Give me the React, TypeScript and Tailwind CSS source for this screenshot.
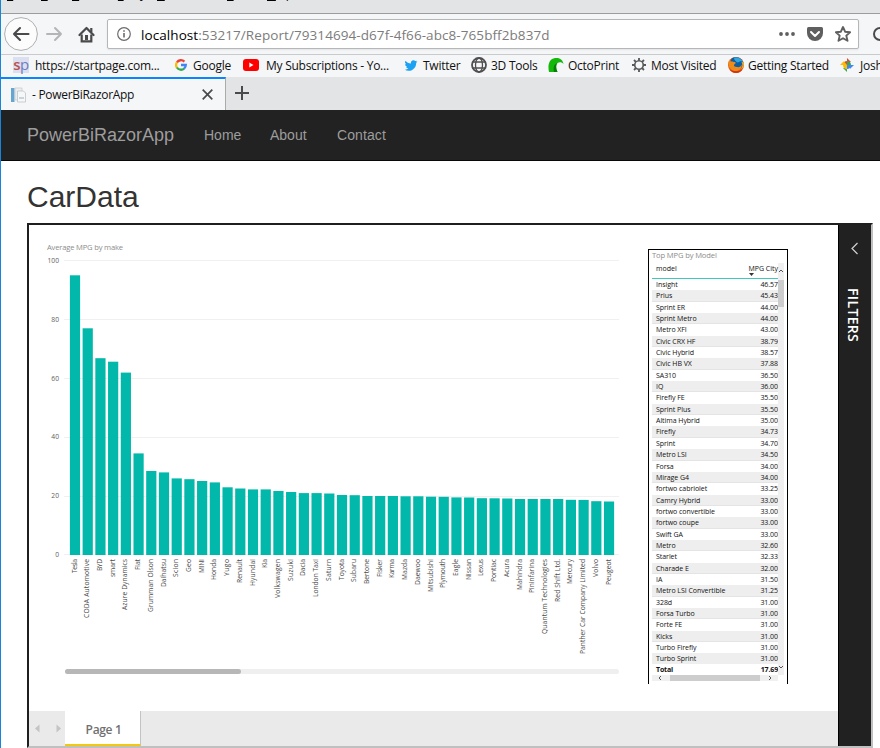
import type { ReactNode } from "react";

type Car = { make: string; top: number; len: number };

const cars: Car[] = [
  ["Tesla", 275.3, 14], ["CODA Automotive", 328.3, 59], ["BYD", 358.2, 12], ["smart", 361.7, 18],
  ["Azure Dynamics", 372.6, 51], ["Fiat", 453.4, 11], ["Grumman Olson", 471, 53], ["Daihatsu", 472.4, 28],
  ["Scion", 478.4, 18], ["Geo", 479.2, 13], ["MINI", 481, 14], ["Honda", 482.4, 21], ["Yugo", 487.3, 17],
  ["Renault", 488.5, 24], ["Hyundai", 489.4, 27], ["Kia", 489.4, 9], ["Volkswagen", 491, 39],
  ["Suzuki", 492, 22], ["Dacia", 493.1, 17], ["London Taxi", 493.1, 38], ["Saturn", 493.5, 22],
  ["Toyota", 495, 21], ["Subaru", 495.2, 23], ["Bertone", 496, 25], ["Fisker", 496, 18], ["Karma", 496, 19],
  ["Mazda", 496.3, 21], ["Daewoo", 496.3, 26], ["Mitsubishi", 496.7, 33], ["Plymouth", 496.8, 29],
  ["Eagle", 497.4, 17], ["Nissan", 497.5, 21], ["Lexus", 498.2, 17], ["Pontiac", 498.3, 23],
  ["Acura", 498.5, 18], ["Mahindra", 499, 31], ["Pininfarina", 499, 34], ["Quantum Technologies", 499, 75],
  ["Red Shift Ltd.", 499, 43], ["Mercury", 499.8, 25], ["Panther Car Company Limited", 499.9, 95],
  ["Volvo", 501.2, 18], ["Peugeot", 501.5, 26],
].map(([make, top, len]) => ({ make, top, len }) as Car);

const models: [string, string][] = [
  ["Insight", "46.57"], ["Prius", "45.43"], ["Sprint ER", "44.00"], ["Sprint Metro", "44.00"],
  ["Metro XFI", "43.00"], ["Civic CRX HF", "38.79"], ["Civic Hybrid", "38.57"], ["Civic HB VX", "37.88"],
  ["SA310", "36.50"], ["IQ", "36.00"], ["Firefly FE", "35.50"], ["Sprint Plus", "35.50"],
  ["Altima Hybrid", "35.00"], ["Firefly", "34.73"], ["Sprint", "34.70"], ["Metro LSI", "34.50"],
  ["Forsa", "34.00"], ["Mirage G4", "34.00"], ["fortwo cabriolet", "33.25"], ["Camry Hybrid", "33.00"],
  ["fortwo convertible", "33.00"], ["fortwo coupe", "33.00"], ["Swift GA", "33.00"], ["Metro", "32.60"],
  ["Starlet", "32.33"], ["Charade E", "32.00"], ["IA", "31.50"], ["Metro LSI Convertible", "31.25"],
  ["328d", "31.00"], ["Forsa Turbo", "31.00"], ["Forte FE", "31.00"], ["Kicks", "31.00"],
  ["Turbo Firefly", "31.00"], ["Turbo Sprint", "31.00"],
];

function MenuBar() {
  return (
    <div className="flex h-[14px] overflow-hidden border-b border-[#9a9c9e] bg-[#e3e4e6] pl-[6px] text-[12px] leading-[16px] text-black">
      <div className="-mt-[14px] flex h-4 underline-offset-2">
        <span className="w-[34px]"><u>F</u>ile</span>
        <span className="w-[31px]"><u>E</u>dit</span>
        <span className="w-[34px]"><u>V</u>iew</span>
        <span className="w-[51px]">Hi<u>s</u>tory</span>
        <span className="w-[70px]"><u>B</u>ookmarks</span>
        <span className="w-[40px]"><u>T</u>ools</span>
        <span><u>H</u>elp</span>
      </div>
    </div>
  );
}

function NavBar() {
  return (
    <div className="flex h-[41px] items-center overflow-hidden border-b border-[#c9cacc] bg-[#f5f6f7] pl-[3px]">
      <svg className="h-[34px] w-[34px] shrink-0" viewBox="0 0 34 34" fill="none">
        <circle cx="17" cy="17" r="16.4" fill="#fcfcfc" stroke="#aeafb0" />
        <path d="M24.500 17H10M16 11l-6 6 6 6" stroke="#4a4a4b" strokeWidth="2.100" strokeLinecap="round" strokeLinejoin="round" />
      </svg>
      <svg className="ml-[8px] h-4 w-[17px] shrink-0" viewBox="0 0 17 16" fill="none" stroke="#b4b5b6" strokeWidth="2" strokeLinecap="round" strokeLinejoin="round">
        <path d="M1 8h14M9 2l6 6-6 6" />
      </svg>
      <svg className="ml-[15px] h-[17px] w-[17px] shrink-0" viewBox="0 0 17 17" fill="none">
        <path d="M1.500 9l7-7 7 7" stroke="#4a4a4b" strokeWidth="2.200" strokeLinecap="round" strokeLinejoin="round" />
        <path d="M3.700 8.500V15.300h9.600V8.500M13.300 2v4" stroke="#4a4a4b" strokeWidth="2.200" />
        <rect x="7" y="9" width="3" height="5" fill="#4a4a4b" />
      </svg>
      <div className="ml-[12px] flex h-[30px] w-[752px] shrink-0 items-center rounded-[2px] border border-[#b5b6b8] bg-white pl-[9px] shadow-[0_1px_2px_rgba(0,0,0,0.08)]">
        <svg className="h-[14px] w-[14px]" viewBox="0 0 14 14" fill="none" stroke="#6b6b6b">
          <circle cx="7" cy="7" r="6.300" strokeWidth="1.200" />
          <path d="M7 6v4.500M7 3.300v1.500" strokeWidth="1.600" />
        </svg>
        <span className="mt-[2px] ml-[10px] w-[638px] whitespace-nowrap text-[13.5px] tracking-[0.075px] text-[#7c7c7c]">
          <span className="text-black">localhost</span>:53217/Report/79314694-d67f-4f66-abc8-765bff2b837d
        </span>
        <svg className="h-4 w-4 shrink-0" viewBox="0 0 16 16" fill="#5f5f60">
          <circle cx="2" cy="8" r="1.900" /><circle cx="8" cy="8" r="1.900" /><circle cx="14" cy="8" r="1.900" />
        </svg>
        <svg className="ml-[12px] h-4 w-4 shrink-0" viewBox="0 0 16 16">
          <path d="M1.500 1h13Q16 1 16 2.500V7a8 8 0 0 1-16 0V2.500Q0 1 1.500 1z" fill="#5f5f60" />
          <path d="M4 6l4 4 4-4" stroke="#fff" strokeWidth="2" fill="none" strokeLinecap="round" strokeLinejoin="round" />
        </svg>
        <svg className="ml-[12px] h-4 w-4 shrink-0" viewBox="0 0 16 16" fill="none" stroke="#5f5f60" strokeWidth="1.900" strokeLinejoin="round">
          <path d="M8 1l2.100 4.700 5 .5-3.800 3.400 1.200 5.200L8 12.200l-4.500 2.600 1.200-5.200L.9 6.200l5-.5z" />
        </svg>
      </div>
      <svg className="ml-[14px] h-4 w-4 shrink-0" viewBox="0 0 16 16" fill="none" stroke="#4a4a4b" strokeWidth="2">
        <circle cx="7" cy="8" r="6" />
      </svg>
    </div>
  );
}

function Bookmark({ icon, label, width }: { icon: ReactNode; label: string; width: string }) {
  return (
    <div className={"flex h-full shrink-0 items-center " + width}>
      {icon}
      <span className="whitespace-nowrap">{label}</span>
    </div>
  );
}

function BookmarksBar() {
  return (
    <div className="flex h-[22px] overflow-hidden bg-[#f5f6f7] pl-[12px] text-[12px] tracking-[-0.260px] text-[#111]">
      <Bookmark width="w-[162px]" label="https://startpage.com..." icon={
        <span className="mr-[6px] flex h-4 w-4 -translate-y-px items-center justify-center bg-[#dcdff0] pb-[2px] text-[15px] leading-none tracking-[-0.500px] text-[#6d7dbd]"><b className="font-semibold text-[#b8544f]">s</b>p</span>
      } />
      <Bookmark width="w-[69px]" label="Google" icon={
        <svg className="mr-[6px] h-[12px] w-[12px] -translate-y-px" viewBox="0 0 12 12" fill="none" strokeWidth="2.300">
          <path d="M1.900 3.500A4.850 4.850 0 0 1 9.400 2.600" stroke="#ea4335" />
          <path d="M1.900 3.400a4.850 4.850 0 0 0 0 5.200" stroke="#fbbc05" />
          <path d="M1.900 8.500a4.850 4.850 0 0 0 7.300 1" stroke="#34a853" />
          <path d="M6 6h4.800a4.850 4.850 0 0 1-1.700 3.600" stroke="#4285f4" />
        </svg>
      } />
      <Bookmark width="w-[160px]" label="My Subscriptions - Yo..." icon={
        <svg className="mr-[6px] h-[12px] w-4 -translate-x-px -translate-y-px" viewBox="0 0 16 12">
          <rect width="16" height="12" rx="3" fill="#f00" /><path d="M6.300 3.500v5L10.500 6z" fill="#fff" />
        </svg>
      } />
      <Bookmark width="w-[67px]" label="Twitter" icon={
        <svg className="mr-[5px] h-[13px] w-[14px] -translate-y-px" viewBox="0 0 24 24" fill="#1da1f2">
          <path d="M23.950 4.570a10 10 0 0 1-2.820.770 4.960 4.960 0 0 0 2.160-2.720c-.950.550-2 .960-3.130 1.180a4.920 4.920 0 0 0-8.380 4.480C7.690 8.100 4.070 6.130 1.640 3.160a4.920 4.920 0 0 0 1.520 6.570 4.900 4.900 0 0 1-2.230-.610v.060a4.920 4.920 0 0 0 3.950 4.830 5 5 0 0 1-2.210.080 4.940 4.940 0 0 0 4.600 3.420A9.870 9.870 0 0 1 0 19.540a14 14 0 0 0 7.550 2.210c9.050 0 14-7.500 14-13.980 0-.210 0-.420-.020-.630a9.940 9.940 0 0 0 2.420-2.570z" />
        </svg>
      } />
      <Bookmark width="w-[77px]" label="3D Tools" icon={
        <svg className="mr-[4px] h-4 w-4 -translate-y-px" viewBox="0 0 16 16" fill="none" stroke="#4f4f50" strokeWidth="1.300">
          <circle cx="8" cy="8" r="7" strokeWidth="1.800" /><ellipse cx="8" cy="8" rx="3.500" ry="7" /><path d="M1.500 5h13M1.500 11h13" />
        </svg>
      } />
      <Bookmark width="w-[84px]" label="OctoPrint" icon={
        <svg className="mr-[4px] h-4 w-4 -translate-y-px" viewBox="0 0 16 16">
          <path d="M1 15C-.5 8 1 2 7 1c5-.7 8 2 8.500 6-1.500-2-4-2.500-6-1C7.500 8 8 12 9.500 15z" fill="#13b80b" />
          <path d="M6 15c-1-5 0-8 3.500-9C7.500 8 8 12 9.500 15z" fill="#087d08" />
        </svg>
      } />
      <Bookmark width="w-[96px]" label="Most Visited" icon={
        <svg className="mr-[5px] h-[14px] w-[14px] -translate-y-px" viewBox="0 0 16 16" fill="none" stroke="#58585a">
          <circle cx="8" cy="8" r="4.900" strokeWidth="1.900" />
          <path d="M8 0v3M8 13v3M0 8h3M13 8h3M2.300 2.300l2.100 2.100M11.600 11.600l2.100 2.100M13.700 2.300l-2.100 2.100M4.400 11.600l-2.100 2.100" strokeWidth="2.100" />
        </svg>
      } />
      <Bookmark width="w-[113px]" label="Getting Started" icon={
        <svg className="mr-[4px] h-4 w-4 -translate-y-px" viewBox="0 0 16 16">
          <circle cx="8" cy="8" r="8" fill="#e25a12" />
          <path d="M3.500 1.500A7.700 7.700 0 0 1 15.200 5.500c-.5 5-4 6.500-7.200 5.500C5 10 2 5 3.500 1.500z" fill="#0b5fa5" />
          <path d="M6 .7c4-1 7.500.8 9 4.300-2-1.500-3.500-.5-5 .5C8 5 6 3 6 .7z" fill="#35a5de" />
          <path d="M1 3.500c1 1.500 3 .5 5 1.500 2 0 2 1 1 2-2 1-1 3 2 3 2.500.5 4-.5 4.500-2.500.5 3.500-2 6-5 6.500C3 14.500-1 9 1 3.500z" fill="#ef8b1a" />
          <path d="M13.500 5c1.500 2.500 1.500 5-.500 7 2.500-1 3-4 2.500-6.500z" fill="#f7c52e" />
          <path d="M1.500 12c3.500 3 9.500 3 13 0-2.500 5.300-10.500 5.300-13 0z" fill="#cf3417" />
        </svg>
      } />
      <Bookmark width="w-[60px]" label="Josh" icon={
        <svg className="mr-[5px] h-[14px] w-[14px] -translate-x-px -translate-y-px" viewBox="0 0 14 14">
          <path d="M7 0l3.800 3.800L7 7z" fill="#ea4335" /><path d="M7 3v4H2.500q1-4 4.500-4z" fill="#ea4335" />
          <path d="M14 7l-3.800 3.800L7 7z" fill="#4285f4" /><path d="M11 7H7V2.500q4 1 4 4.500z" fill="#34a853" />
          <path d="M7 14l-3.800-3.800L7 7z" fill="#34a853" /><path d="M7 11V7h4.500q-1 4-4.500 4z" fill="#4285f4" />
          <path d="M0 7l3.800-3.800L7 7z" fill="#fbbc05" /><path d="M3 7h4v4.500Q3 10.500 3 7z" fill="#fbbc05" />
        </svg>
      } />
    </div>
  );
}

function TabStrip() {
  return (
    <div className="flex h-[33px] bg-[#e3e4e6]">
      <div className="flex w-[225px] items-center border-t-2 border-r border-t-[#0a84ff] border-r-[#aaa] bg-[#f5f6f7] pl-[10px]">
        <svg className="h-4 w-[15px]" viewBox="0 0 15 16">
          <rect x="0" y="1" width="3.500" height="14" fill="#65a5cf" /><path d="M4 1h7v12H4z" fill="#eceeef" stroke="#c4c9cc" strokeWidth=".7" />
          <path d="M6.500 4h6l2 2v9h-8z" fill="#f6f7f8" stroke="#b7bdc1" strokeWidth=".7" /><path d="M8 10h5v2H8z" fill="#ccd2d7" />
        </svg>
        <span className="ml-[6px] w-[170px] pt-px text-[12px] tracking-[-0.300px] text-[#111]">- PowerBiRazorApp</span>
        <svg className="h-[11px] w-[11px]" viewBox="0 0 11 11" stroke="#4a4a4b" strokeWidth="1.700"><path d="M.7.7l9.600 9.600M10.300.7L.7 10.300" /></svg>
      </div>
      <svg className="mt-[9px] ml-[9px] h-[14px] w-[14px]" viewBox="0 0 14 14" stroke="#4a4a4b" strokeWidth="2"><path d="M7 0v14M0 7h14" /></svg>
    </div>
  );
}

function BarChart() {
  return (
    <svg className="h-[486px] w-[611px] shrink-0" viewBox="29 225 611 486" fontFamily="'Open Sans', 'Noto Sans', sans-serif" fontSize="6.700">
      <text x="47" y="250" fill="#8c8c8c" fontSize="7.600" textLength="76">Average MPG by make</text>
      {[0, 20, 40, 60, 80, 100].map((v) => (
        <g key={v}>
          <rect x="64" y={v === 0 ? 554 : Math.round(555.4 - v * 2.94) - 1} width="555" height="1" fill="#f0f0f0" />
          <text x="59" y={556.9 - v * 2.937} textAnchor="end" fill="#606060">{v}</text>
        </g>
      ))}
      {cars.map((c, i) => {
        const x = 69.9 + i * 12.715;
        return (
          <g key={c.make}>
            <rect x={x} y={c.top} width="10.200" height={555 - c.top} fill="#01b8aa" />
            <text transform={`translate(${x + 6.7} ${559 + c.len}) rotate(-90)`} textLength={c.len} fill="#4c4c4c">{c.make}</text>
          </g>
        );
      })}
      <rect x="65" y="669" width="554" height="5" rx="2.500" fill="#efefef" />
      <rect x="65" y="669" width="176" height="5" rx="2.500" fill="#b7b7b7" />
    </svg>
  );
}

function ModelTable() {
  return (
    <div className="mt-[24px] ml-[8px] h-[435px] w-[140px] shrink-0 border border-b-0 border-black pl-[3px] text-[7px] text-[#111]">
      <div className="h-[13px] text-[7.600px] leading-[11px] tracking-[-0.140px] text-[#8c8c8c]">Top MPG by Model</div>
      <div className="flex">
        <div className="w-[126px]">
          <div className="flex h-[16px] justify-between border-b border-[#3fc8bd] pl-[4px] leading-[11px]">
            <span>model</span>
            <span className="relative">MPG City
              <svg className="absolute top-[10px] left-[1px] h-[3px] w-[5px]" viewBox="0 0 5 3"><path d="M0 0h5L2.500 3z" fill="#333" /></svg>
            </span>
          </div>
          <div className="h-[385px] overflow-hidden">
            {models.map(([m, v], i) => (
              <div key={m} className={"flex h-[11.350px] justify-between pl-[4px] leading-[11.800px] " + (i % 2 ? "border-b border-[#e4e4e4] bg-[#eeeeee]" : "")}>
                <span className="whitespace-nowrap tracking-[-0.050px]">{m}</span>
                <span className="tracking-[-0.050px]">{v}</span>
              </div>
            ))}
          </div>
          <div className="flex h-[11px] justify-between pl-[4px] leading-[11px] font-bold tracking-[-0.150px]">
            <span>Total</span><span>17.69</span>
          </div>
          <div className="flex h-[6px] items-center justify-between bg-[#f0f0f0] px-[6px]">
            <svg className="h-[4px] w-[4px]" viewBox="0 0 4 4" fill="none" stroke="#555"><path d="M3 0L1 2l2 2" /></svg>
            <div className="h-[6px] w-[90px] bg-[#cdcdcd]" />
            <svg className="h-[4px] w-[4px]" viewBox="0 0 4 4" fill="none" stroke="#555"><path d="M1 0l2 2-2 2" /></svg>
          </div>
        </div>
        <div className="flex h-[412px] w-[6px] flex-col items-center bg-[#f0f0f0]">
          <svg className="mt-[6px] h-[4px] w-[4px]" viewBox="0 0 4 4" fill="none" stroke="#555"><path d="M0 3l2-2 2 2" /></svg>
          <div className="mt-[7px] h-[27px] w-[6px] bg-[#cdcdcd]" />
          <svg className="mt-auto mb-[6px] h-[4px] w-[4px]" viewBox="0 0 4 4" fill="none" stroke="#555"><path d="M0 1l2 2 2-2" /></svg>
        </div>
      </div>
    </div>
  );
}

function Report() {
  return (
    <div className="flex h-[525px] w-[846px] border-2 border-t-[#1f1f1f] border-r-[#c0c0c0] border-b-[#c0c0c0] border-l-[#1f1f1f]">
      <div className="flex w-[809px] flex-col">
        <div className="flex h-[486px]">
          <BarChart />
          <ModelTable />
        </div>
        <div className="flex h-[35px] bg-[#eaeaea]">
          <svg className="h-[35px] w-[36px]" viewBox="0 0 36 35" fill="#c4c4c4"><path d="M10.500 13.500v8L6 17.500zM27.500 13.500v8l4.500-4z" /></svg>
          <div className="flex w-[76px] items-center justify-center border-r border-b-2 border-r-[#c4c4c4] border-b-[#f2c811] bg-white pt-[5px] pl-[2px] text-[12px] font-semibold tracking-[-0.350px] text-[#707070]">Page 1</div>
        </div>
      </div>
      <div className="flex w-[33px] flex-col items-center border-l border-black bg-[#212121] text-white">
        <svg className="mt-[17px] h-[13px] w-[8px]" viewBox="0 0 8 13" fill="none" stroke="#d0d0d0" strokeWidth="1.200"><path d="M6.500 1L1 6.500 6.500 12" /></svg>
        <span className="mt-[33px] ml-[-4px] text-[14px] leading-[18px] font-semibold tracking-[0.350px] [writing-mode:vertical-rl]">FILTERS</span>
      </div>
    </div>
  );
}

export default function App() {
  return (
    <div className="h-[748px] w-[880px] overflow-hidden border-l border-[#1a84d8] bg-white font-['Open_Sans','Noto_Sans',sans-serif]">
      <MenuBar />
      <NavBar />
      <BookmarksBar />
      <TabStrip />
      <header className="flex h-[51px] items-center border-b border-[#080808] bg-[#222222] pl-[26px] font-['Liberation_Sans',Arial,sans-serif] text-[14px] text-[#9d9d9d]">
        <span className="w-[177px] text-[18px]">PowerBiRazorApp</span>
        <span className="w-[66px]">Home</span>
        <span className="w-[67px]">About</span>
        <span className="tracking-[0.100px]">Contact</span>
      </header>
      <main className="pl-[26px]">
        <h2 className="h-[62px] pt-[19px] font-['Liberation_Sans',Arial,sans-serif] text-[30px] leading-[33px] text-[#333]">CarData</h2>
        <Report />
      </main>
    </div>
  );
}
